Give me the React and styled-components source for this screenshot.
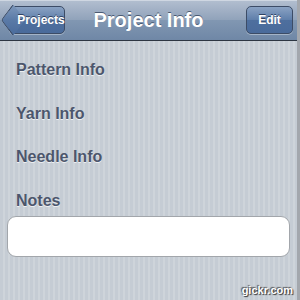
import React from "react";
import styled, { createGlobalStyle } from "styled-components";

const Global = createGlobalStyle`
  html, body { margin: 0; padding: 0; }
  body { width: 300px; height: 300px; overflow: hidden; font-family: "Liberation Sans", Arial, sans-serif; }
`;

const Screen = styled.div`
  width: 300px;
  height: 300px;
  display: flex;
  flex-direction: column;
  position: relative;
  background: repeating-linear-gradient(90deg, #c5ccd4 0 3px, #ced4da 3px 5px);
  border-right: 3px solid #a3a7ad;
  box-sizing: border-box;
  overflow: hidden;
`;

const NavBar = styled.div`
  height: 41px;
  flex: 0 0 41px;
  box-sizing: border-box;
  display: flex;
  align-items: center;
  justify-content: space-between;
  padding: 0 4px 0 3px;
  position: relative;
  background: linear-gradient(#b3bfd0 0%, #90a2ba 50%, #8197b2 51%, #6f87a6 100%);
  border-bottom: 1px solid #2d3642;
  box-shadow: inset 0 1px 0 #cfd7e2;
`;

const Title = styled.div`
  position: absolute;
  left: 0;
  right: 0;
  top: 0;
  bottom: 0;
  display: flex;
  align-items: center;
  justify-content: center;
  color: #fff;
  font-weight: bold;
  font-size: 20px;
  text-shadow: 0 -1px 0 #4a5a72;
  pointer-events: none;
`;

const BarButton = styled.div`
  position: relative;
  z-index: 1;
  height: 28px;
  box-sizing: border-box;
  display: flex;
  align-items: center;
  justify-content: center;
  color: #fff;
  font-weight: bold;
  font-size: 12px;
  text-shadow: 0 -1px 0 #2f4161;
  background: linear-gradient(#8aa2c3 0%, #5e7eaa 50%, #4e6f9e 51%, #4a6b9b 100%);
  border: 1px solid #3c4c66;
  border-radius: 5px;
  box-shadow: 0 1px 0 rgba(255,255,255,0.35);
  width: ${p => p.$w}px;
  padding-left: ${p => (p.$back ? 8 : 0)}px;
`;

const BackArrow = styled.div`
  position: absolute;
  left: -7px;
  top: 3px;
  width: 19px;
  height: 19px;
  transform: rotate(45deg) skew(8deg, 8deg);
  background: linear-gradient(135deg, #7e98bb 0%, #5a7aa7 50%, #4a6b9b 100%);
  border-left: 1px solid #3c4c66;
  border-bottom: 1px solid #3c4c66;
  border-radius: 0 0 0 3px;
  z-index: -1;
`;

const BackWrap = styled.div`
  position: relative;
  margin-left: 6px;
`;

const Content = styled.div`
  display: flex;
  flex-direction: column;
  padding: 20px 0 0 7px;
`;

const Label = styled.div`
  font-weight: bold;
  font-size: 16px;
  color: #4c566c;
  text-shadow: 0 1px 0 rgba(255,255,255,0.7);
  padding-left: 9px;
  height: 43.5px;
  line-height: 17px;
`;

const TextBox = styled.div`
  width: 283px;
  height: 41px;
  margin-top: -19px;
  background: #fff;
  border: 1px solid #a2a6ab;
  border-radius: 9px;
  box-sizing: border-box;
`;

const Watermark = styled.div`
  position: absolute;
  right: 4px;
  bottom: 4px;
  color: #fff;
  font-size: 11px;
  font-weight: bold;
  font-family: "Liberation Sans", Arial, sans-serif;
  text-shadow: 1px 1px 1px #333, -1px -1px 1px #555;
`;

export default function App() {
  return (
    <>
      <Global />
      <Screen>
        <NavBar>
          <BackWrap>
            <BarButton $w={56} $back>
              <BackArrow />
              Projects
            </BarButton>
          </BackWrap>
          <Title>Project Info</Title>
          <BarButton $w={47}>Edit</BarButton>
        </NavBar>
        <Content>
          <Label>Pattern Info</Label>
          <Label>Yarn Info</Label>
          <Label>Needle Info</Label>
          <Label>Notes</Label>
          <TextBox />
        </Content>
        <Watermark>gickr.com</Watermark>
      </Screen>
    </>
  );
}
